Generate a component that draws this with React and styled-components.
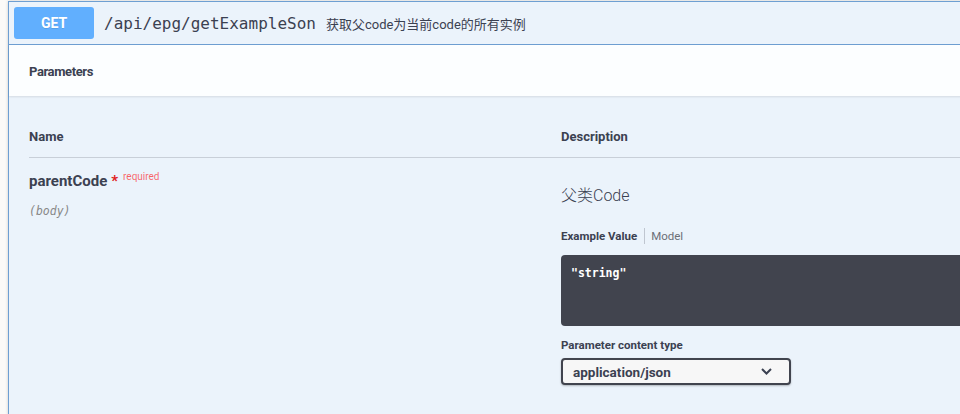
import React from "react";
import styled, { createGlobalStyle } from "styled-components";

const GlobalStyle = createGlobalStyle`
  html, body {
    margin: 0;
    padding: 0;
    background: #fbfaf8;
  }
  body {
    font-family: Roboto, "Noto Sans CJK SC", sans-serif;
    color: #3b4151;
  }
  * {
    box-sizing: border-box;
  }
`;

const Page = styled.div`
  width: 960px;
  height: 414px;
  overflow: hidden;
  padding: 1px 0 0 8px;
`;

const Opblock = styled.div`
  width: 1120px;
  background: #ebf3fb;
  border: 1px solid #6e9fd2;
  box-shadow: 0 0 3px rgba(0, 0, 0, 0.19);
`;

const Summary = styled.div`
  display: flex;
  align-items: center;
  padding: 5px;
  border-bottom: 1px solid #6e9fd2;
`;

const MethodBadge = styled.span`
  min-width: 80px;
  height: 32px;
  display: flex;
  align-items: center;
  justify-content: center;
  border-radius: 3px;
  background: #61affe;
  color: #fff;
  font-size: 14px;
  font-weight: 700;
  text-shadow: 0 1px 0 rgba(0, 0, 0, 0.1);
`;

const Path = styled.span`
  padding: 0 10px;
  font-family: "DejaVu Sans Mono", "Liberation Mono", monospace;
  font-size: 16px;
  color: #3b4151;
`;

const SummaryDesc = styled.span`
  font-family: Roboto, "Noto Sans CJK SC", sans-serif;
  font-size: 13px;
  color: #3b4151;
`;

const SectionHeader = styled.div`
  display: flex;
  align-items: center;
  min-height: 51px;
  padding: 9px 20px 7px;
  background: rgba(255, 255, 255, 0.85);
  box-shadow: 0 1px 2px rgba(0, 0, 0, 0.1);
`;

const SectionTitle = styled.h4`
  margin: 0;
  font-size: 13px;
  font-weight: 700;
  letter-spacing: -0.4px;
  color: #3b4151;
`;

const TableWrap = styled.div`
  padding: 21px 0 20px 20px;
`;

const Row = styled.div`
  display: flex;
  align-items: flex-start;
  padding: ${(p) => (p.$head ? "12px 0" : "10px 0")};
  border-bottom: ${(p) => (p.$head ? "1px solid rgba(59, 65, 81, 0.2)" : "none")};
`;

const NameCol = styled.div`
  width: 532px;
  flex: none;
`;

const DescCol = styled.div`
  flex: 1;
`;

const HeadText = styled.span`
  display: block;
  font-size: 13px;
  line-height: 16px;
  font-weight: 700;
  color: #3b4151;
`;

const ParamName = styled.div`
  margin-top: -1px;
  font-size: 15px;
  line-height: 20px;
  font-weight: 700;
  color: #3b4151;
`;

const Star = styled.span`
  margin-left: 4px;
  color: #e02020;
`;

const Required = styled.span`
  padding-left: 5px;
  font-size: 10px;
  font-weight: 400;
  vertical-align: 6px;
  color: rgba(255, 0, 0, 0.6);
`;

const ParamIn = styled.div`
  padding-top: 12px;
  font-family: "DejaVu Sans Mono", "Liberation Mono", monospace;
  font-size: 11.5px;
  line-height: 16px;
  font-style: italic;
  color: #888;
`;

const Markdown = styled.p`
  margin: 17px 0 0;
  font-family: Roboto, "Noto Sans CJK SC", sans-serif;
  font-size: 16px;
  line-height: 22px;
  font-weight: 300;
  color: #3b4151;
`;

const Tabs = styled.div`
  display: flex;
  align-items: center;
  margin: 21px 0 11px;
  line-height: 16px;
`;

const Tab = styled.span`
  font-size: 11.5px;
  font-weight: ${(p) => (p.$active ? 700 : 400)};
  color: ${(p) => (p.$active ? "#3b4151" : "#6b6f78")};
`;

const TabDivider = styled.span`
  width: 1px;
  height: 16px;
  margin: 0 6px 0 7px;
  background: rgba(59, 65, 81, 0.25);
`;

const CodeBlock = styled.pre`
  margin: 0;
  height: 71px;
  padding: 10px 10px;
  border-radius: 4px;
  background: #41444e;
  color: #fff;
  font-family: "DejaVu Sans Mono", "Liberation Mono", monospace;
  font-size: 11.5px;
  line-height: 16px;
  font-weight: 700;
`;

const Label = styled.div`
  margin: 11px 0 5px;
  font-size: 11.5px;
  line-height: 16px;
  font-weight: 700;
  color: #3b4151;
`;

const Select = styled.div`
  width: 230px;
  height: 27px;
  display: flex;
  align-items: center;
  justify-content: space-between;
  padding: 0 17px 0 10px;
  border: 2px solid #41444e;
  border-radius: 4px;
  background: #f7f7f7;
  box-shadow: 0 1px 2px rgba(0, 0, 0, 0.25);
  font-size: 13.5px;
  font-weight: 700;
  color: #3b4151;
`;

const Chevron = () => (
  <svg width="11" height="7" viewBox="0 0 11 7">
    <path d="M1 1l4.5 4.5L10 1" fill="none" stroke="#3b4151" strokeWidth="2" />
  </svg>
);

export default function App() {
  return (
    <Page>
      <GlobalStyle />
      <Opblock>
        <Summary>
          <MethodBadge>GET</MethodBadge>
          <Path>/api/epg/getExampleSon</Path>
          <SummaryDesc>获取父code为当前code的所有实例</SummaryDesc>
        </Summary>
        <SectionHeader>
          <SectionTitle>Parameters</SectionTitle>
        </SectionHeader>
        <TableWrap>
          <Row $head>
            <NameCol>
              <HeadText>Name</HeadText>
            </NameCol>
            <DescCol>
              <HeadText>Description</HeadText>
            </DescCol>
          </Row>
          <Row>
            <NameCol>
              <ParamName>
                parentCode
                <Star>*</Star>
                <Required>required</Required>
              </ParamName>
              <ParamIn>(body)</ParamIn>
            </NameCol>
            <DescCol>
              <Markdown>父类Code</Markdown>
              <Tabs>
                <Tab $active>Example Value</Tab>
                <TabDivider />
                <Tab>Model</Tab>
              </Tabs>
              <CodeBlock>"string"</CodeBlock>
              <Label>Parameter content type</Label>
              <Select>
                <span>application/json</span>
                <Chevron />
              </Select>
            </DescCol>
          </Row>
        </TableWrap>
      </Opblock>
    </Page>
  );
}
